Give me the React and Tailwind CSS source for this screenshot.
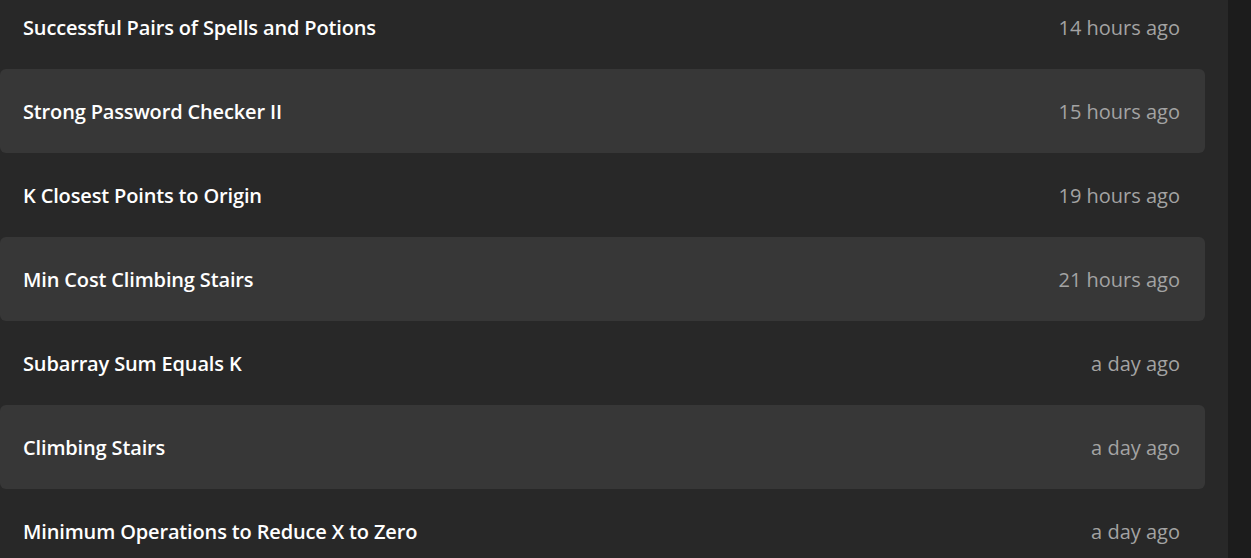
import React from 'react';

const items = [
    { title: 'Successful Pairs of Spells and Potions', time: '14 hours ago' },
    { title: 'Strong Password Checker II', time: '15 hours ago' },
    { title: 'K Closest Points to Origin', time: '19 hours ago' },
    { title: 'Min Cost Climbing Stairs', time: '21 hours ago' },
    { title: 'Subarray Sum Equals K', time: 'a day ago' },
    { title: 'Climbing Stairs', time: 'a day ago' },
    { title: 'Minimum Operations to Reduce X to Zero', time: 'a day ago' },
];

function App() {
    return (
        <div className="flex h-[558px] overflow-hidden bg-[#282828]" style={{ fontFamily: '"Open Sans", "Noto Sans", sans-serif' }}>
            <div className="flex-1 pr-[23px]">
                <div className="-mt-[15px] flex flex-col">
                    {items.map((item, i) => (
                        <div
                            key={item.title}
                            className={`flex h-[84px] shrink-0 items-center justify-between rounded-md pl-[23px] pr-[25px] pt-[2px] ${i % 2 === 1 ? 'bg-[#373737]' : ''}`}
                        >
                            <span className="text-[20px] font-semibold tracking-[-0.15px] text-white">{item.title}</span>
                            <span className="text-[20px] text-[#a3a3a3]">{item.time}</span>
                        </div>
                    ))}
                </div>
            </div>
            <div className="w-[23px] bg-[#1c1c1c]" />
        </div>
    );
}

export default App;
